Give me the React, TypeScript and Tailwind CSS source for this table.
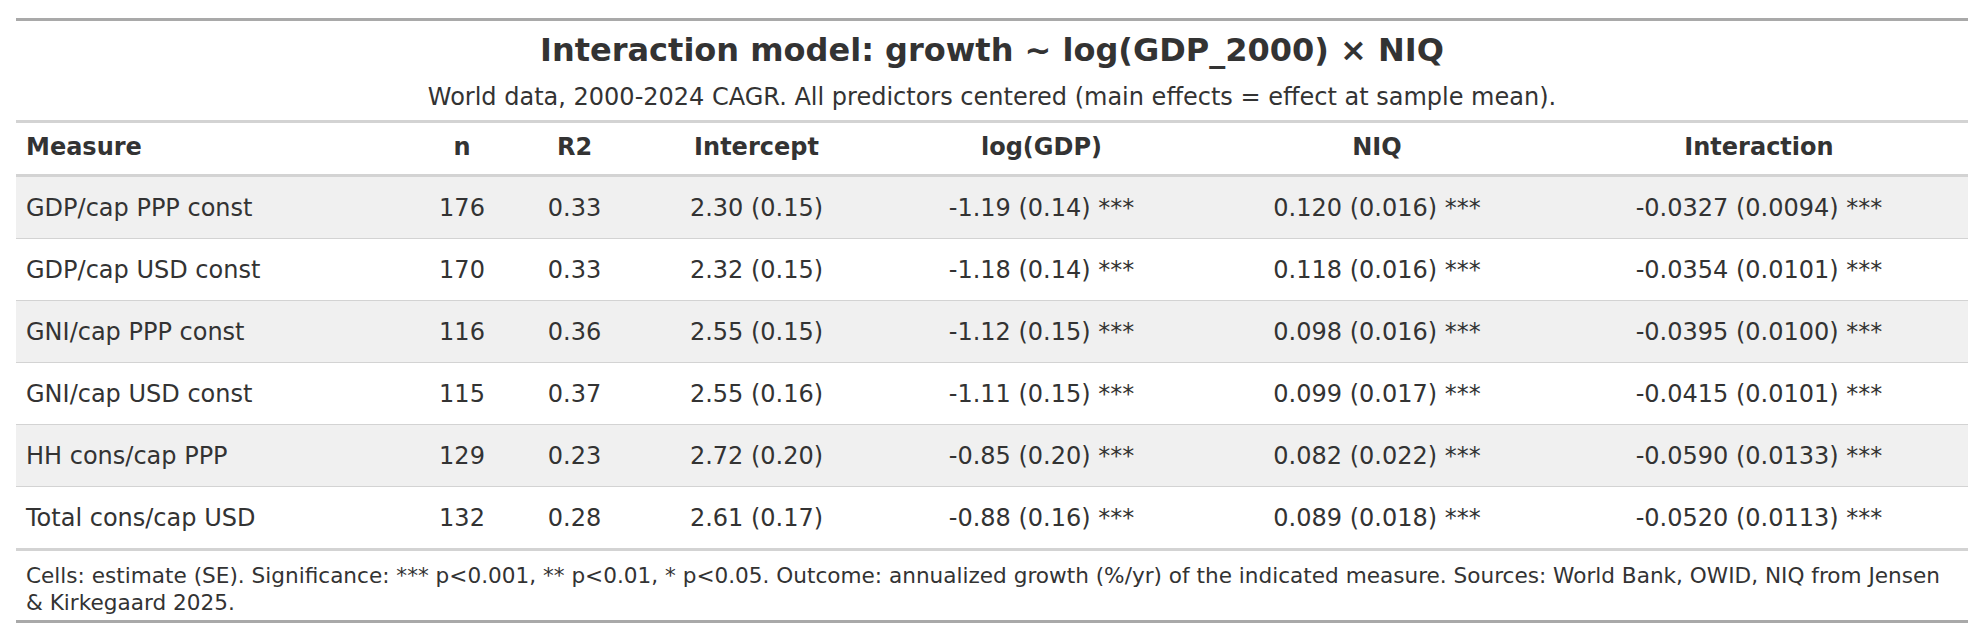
import React from 'react';

// ── Data ──────────────────────────────────────────────────────────────────────

interface Row {
  measure:     string;
  n:           number;
  r2:          string;
  intercept:   string;
  logGdp:      string;
  niq:         string;
  interaction: string;
}

const ROWS: Row[] = [
  { measure: 'GDP/cap PPP const',  n: 176, r2: '0.33', intercept: '2.30 (0.15)', logGdp: '-1.19 (0.14) ***', niq: '0.120 (0.016) ***', interaction: '-0.0327 (0.0094) ***' },
  { measure: 'GDP/cap USD const',  n: 170, r2: '0.33', intercept: '2.32 (0.15)', logGdp: '-1.18 (0.14) ***', niq: '0.118 (0.016) ***', interaction: '-0.0354 (0.0101) ***' },
  { measure: 'GNI/cap PPP const',  n: 116, r2: '0.36', intercept: '2.55 (0.15)', logGdp: '-1.12 (0.15) ***', niq: '0.098 (0.016) ***', interaction: '-0.0395 (0.0100) ***' },
  { measure: 'GNI/cap USD const',  n: 115, r2: '0.37', intercept: '2.55 (0.16)', logGdp: '-1.11 (0.15) ***', niq: '0.099 (0.017) ***', interaction: '-0.0415 (0.0101) ***' },
  { measure: 'HH cons/cap PPP',    n: 129, r2: '0.23', intercept: '2.72 (0.20)', logGdp: '-0.85 (0.20) ***', niq: '0.082 (0.022) ***', interaction: '-0.0590 (0.0133) ***' },
  { measure: 'Total cons/cap USD', n: 132, r2: '0.28', intercept: '2.61 (0.17)', logGdp: '-0.88 (0.16) ***', niq: '0.089 (0.018) ***', interaction: '-0.0520 (0.0113) ***' },
];

const HEADERS = ['n', 'R2', 'Intercept', 'log(GDP)', 'NIQ', 'Interaction'];

const GRID = 'grid grid-cols-[393px_106px_119px_245px_325px_346px_418px]';

// ── Table ─────────────────────────────────────────────────────────────────────

export default function App() {
  return (
    <div className="w-[1984px] h-[642px] bg-white text-[#333333] font-['DejaVu_Sans',sans-serif]">
      <div className="mx-4 pt-[18px]">
        <div className="border-t-[3px] border-[#a9a9a9]">
          {/* Caption */}
          <div className="pt-[10px] pb-[9px] text-center">
            <div className="text-[32px] font-bold leading-[38px]">
              Interaction model: growth ~ log(GDP_2000) × NIQ
            </div>
            <div className="mt-[14px] text-[24px] leading-[28px]">
              World data, 2000-2024 CAGR. All predictors centered (main effects = effect at sample mean).
            </div>
          </div>

          {/* Column header */}
          <div className={`${GRID} h-[57px] pb-[3px] items-center border-y-[3px] border-[#d3d3d3] text-[24px] font-bold`}>
            <div className="px-[10px]">Measure</div>
            {HEADERS.map(h => (
              <div key={h} className="text-center">{h}</div>
            ))}
          </div>

          {/* Body */}
          {ROWS.map((r, i) => (
            <div
              key={r.measure}
              className={`${GRID} items-center text-[24px] ${i % 2 === 0 ? 'bg-[#f0f0f0]' : 'bg-white'} ${i < ROWS.length - 1 ? 'h-[62px] border-b border-[#d3d3d3]' : 'h-[61px]'}`}
            >
              <div className="px-[10px]">{r.measure}</div>
              <div className="text-center">{r.n}</div>
              <div className="text-center">{r.r2}</div>
              <div className="text-center">{r.intercept}</div>
              <div className="text-center">{r.logGdp}</div>
              <div className="text-center">{r.niq}</div>
              <div className="text-center">{r.interaction}</div>
            </div>
          ))}

          {/* Footnote */}
          <div className="border-y-[3px] border-t-[#d3d3d3] border-b-[#a9a9a9] px-[10px] pt-[11px] pb-[3px] text-[21.6px] leading-[27.4px]">
            Cells: estimate (SE). Significance: *** p&lt;0.001, ** p&lt;0.01, * p&lt;0.05. Outcome: annualized growth (%/yr) of the indicated measure. Sources: World Bank, OWID, NIQ from Jensen &amp; Kirkegaard 2025.
          </div>
        </div>
      </div>
    </div>
  );
}
